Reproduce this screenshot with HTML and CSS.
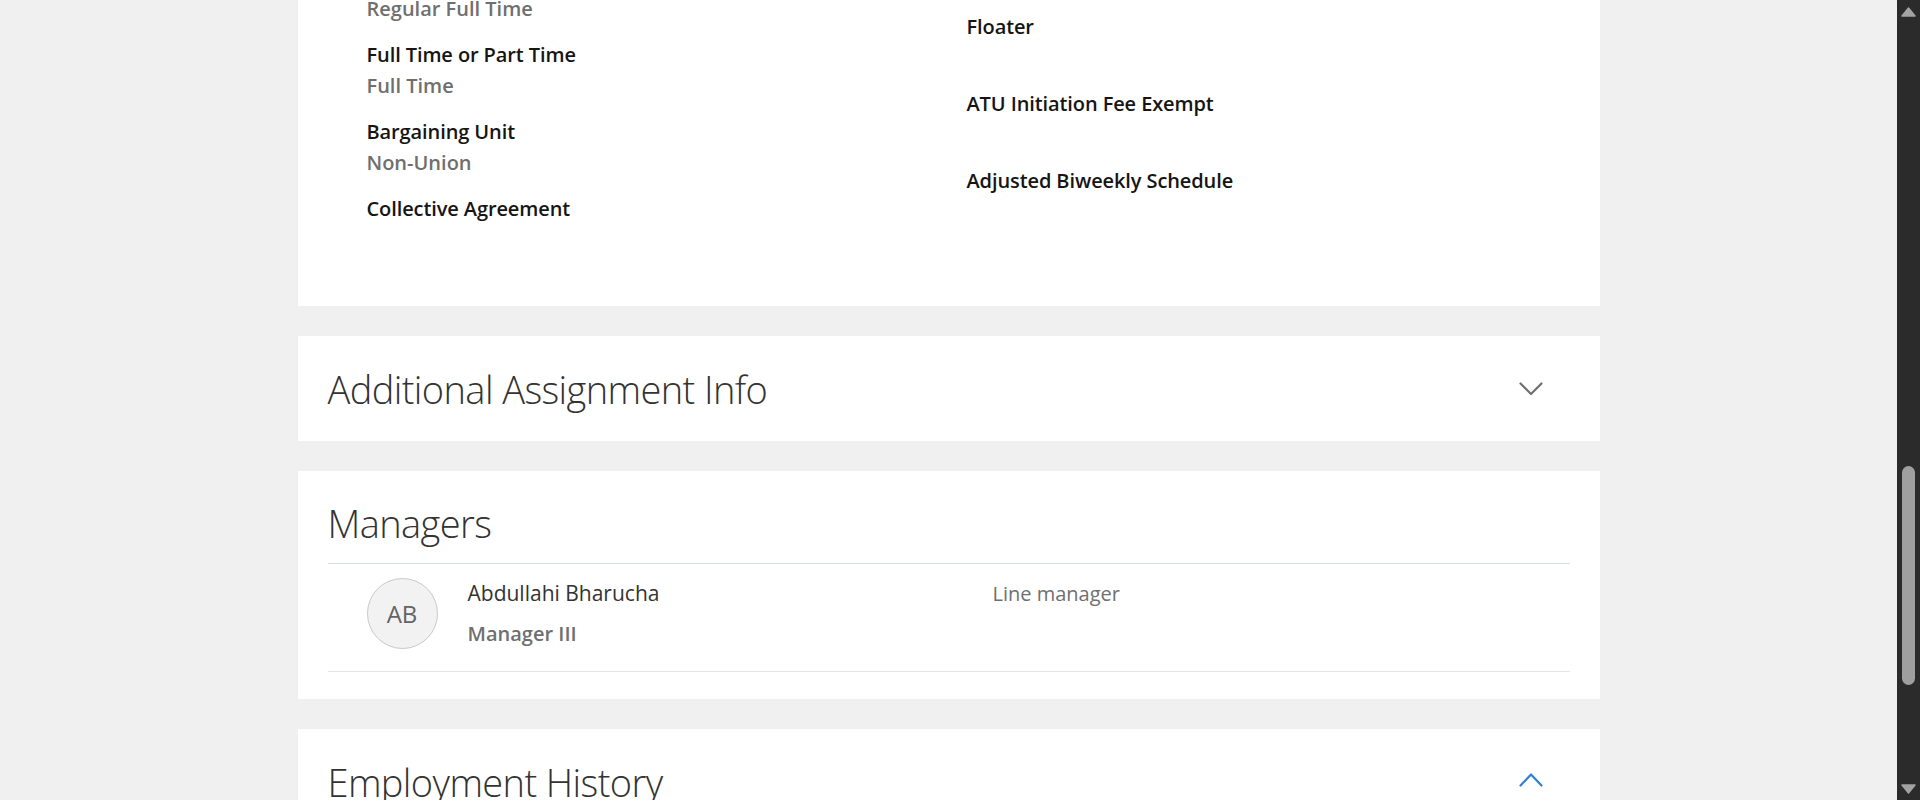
FILE: index.html
```html
<!DOCTYPE html>
<html lang="en">
<head>
<meta charset="utf-8">
<title>Assignment</title>
<link rel="stylesheet" href="styles.css">
</head>
<body>
<div class="viewport">
  <div class="page">
    <section class="card card-fields">
      <div class="field-grid">
        <div class="field-col">
          <div class="field"><div class="label">Assignment Category</div><div class="value">Regular Full Time</div></div>
          <div class="field"><div class="label">Full Time or Part Time</div><div class="value">Full Time</div></div>
          <div class="field"><div class="label">Bargaining Unit</div><div class="value">Non-Union</div></div>
          <div class="field"><div class="label">Collective Agreement</div><div class="value"></div></div>
        </div>
        <div class="field-col field-col-right">
          <div class="field"><div class="label">Floater</div><div class="value"></div></div>
          <div class="field"><div class="label">ATU Initiation Fee Exempt</div><div class="value"></div></div>
          <div class="field"><div class="label">Adjusted Biweekly Schedule</div><div class="value"></div></div>
        </div>
      </div>
    </section>

    <section class="card card-collapsible">
      <h2 class="card-title">Additional Assignment Info</h2>
      <span class="toggle">
        <svg width="24" height="14" viewBox="0 0 24 14"><polyline points="1.5,1.5 12,12 22.5,1.5" fill="none" stroke="#6f6f6f" stroke-width="2.2" stroke-linecap="round" stroke-linejoin="round"/></svg>
      </span>
    </section>

    <section class="card card-managers">
      <h2 class="card-title card-title-block">Managers</h2>
      <div class="manager-list">
        <div class="manager-row">
          <div class="avatar">AB</div>
          <div class="manager-info">
            <div class="manager-name">Abdullahi Bharucha</div>
            <div class="manager-job">Manager III</div>
          </div>
          <div class="manager-type">Line manager</div>
        </div>
      </div>
    </section>

    <section class="card card-collapsible">
      <h2 class="card-title">Employment History</h2>
      <span class="toggle toggle-open">
        <svg width="24" height="14" viewBox="0 0 24 14"><polyline points="1.5,12.5 12,1.5 22.5,12.5" fill="none" stroke="#2e80d6" stroke-width="2.2" stroke-linecap="round" stroke-linejoin="round"/></svg>
      </span>
    </section>
  </div>
</div>
<div class="scrollbar">
  <div class="sb-arrow sb-arrow-up">
    <svg width="15" height="10" viewBox="0 0 15 10"><polygon points="7.5,1 14,9 1,9" fill="#a3a3a3" stroke="#a3a3a3" stroke-width="1.5" stroke-linejoin="round"/></svg>
  </div>
  <div class="sb-thumb"></div>
  <div class="sb-arrow sb-arrow-down">
    <svg width="15" height="10" viewBox="0 0 15 10"><polygon points="1,1 14,1 7.5,9" fill="#a3a3a3" stroke="#a3a3a3" stroke-width="1.5" stroke-linejoin="round"/></svg>
  </div>
</div>
</body>
</html>
```

FILE: styles.css
```css
html, body {
  margin: 0;
  height: 800px;
  overflow: hidden;
}

body {
  display: flex;
  background: #f0f0f0;
  font-family: "Open Sans", "Noto Sans", sans-serif;
  color: #161513;
}

.viewport {
  flex: 1;
  height: 800px;
  overflow: hidden;
}

.page {
  width: 1302px;
  margin: -38px auto 0;
  display: flex;
  flex-direction: column;
  gap: 30px;
}

.card {
  background: #ffffff;
}

/* field card */
.card-fields {
  padding: 0 30px 36px;
}

.field-grid {
  display: grid;
  grid-template-columns: 600px 1fr;
  padding-left: 39px;
}

.field-col-right {
  padding-top: 49px;
}

.field {
  height: 77px;
}

.label,
.value {
  font-size: 20px;
  line-height: 31px;
  height: 31px;
  font-weight: 600;
  white-space: nowrap;
}

.label {
  color: #161513;
  letter-spacing: -0.1px;
}

.value {
  color: #6f6f6f;
}

/* collapsible headers */
.card-collapsible {
  height: 105px;
  box-sizing: border-box;
  display: flex;
  align-items: center;
  justify-content: space-between;
  padding: 0 57px 0 30px;
}

.card-title {
  margin: 0;
  font-size: 38px;
  font-weight: 300;
  letter-spacing: -0.6px;
  color: #333333;
  line-height: 54px;
  white-space: nowrap;
}

.toggle {
  display: flex;
  width: 24px;
  height: 14px;
}

.toggle-open {
  margin-bottom: 4px;
}

/* managers */
.card-managers {
  padding: 25px 30px 27px;
}

.card-title-block {
  margin-bottom: 13px;
}

.manager-list {
  border-top: 1px solid #d8dde2;
}

.manager-row {
  display: grid;
  grid-template-columns: 71px 495px 1fr;
  column-gap: 30px;
  align-items: start;
  padding: 14px 0 22px 39px;
  border-bottom: 1px solid #e6e6e6;
}

.avatar {
  width: 69px;
  height: 69px;
  border: 1px solid #c9c9c9;
  border-radius: 50%;
  background: #f2f2f2;
  color: #646464;
  font-size: 24px;
  display: flex;
  align-items: center;
  justify-content: center;
}

.manager-info {
  display: flex;
  flex-direction: column;
  gap: 9px;
}

.manager-name,
.manager-job,
.manager-type {
  font-size: 20px;
  line-height: 31px;
  white-space: nowrap;
}

.manager-name {
  font-size: 21px;
  color: #333333;
}

.manager-job {
  color: #6f6f6f;
  font-weight: 600;
}

.manager-type {
  color: #6f6f6f;
}

/* scrollbar */
.scrollbar {
  width: 23px;
  height: 800px;
  background: #2b2b2b;
  display: flex;
  flex-direction: column;
  align-items: center;
}

.sb-arrow {
  display: flex;
  justify-content: center;
}

.sb-arrow-up {
  height: 24px;
  padding-top: 7px;
  box-sizing: border-box;
}

.sb-thumb {
  width: 13px;
  height: 219px;
  margin-top: 442px;
  border-radius: 7px;
  background: #9f9f9f;
}

.sb-arrow-down {
  margin-top: auto;
  margin-bottom: 6px;
}
```
